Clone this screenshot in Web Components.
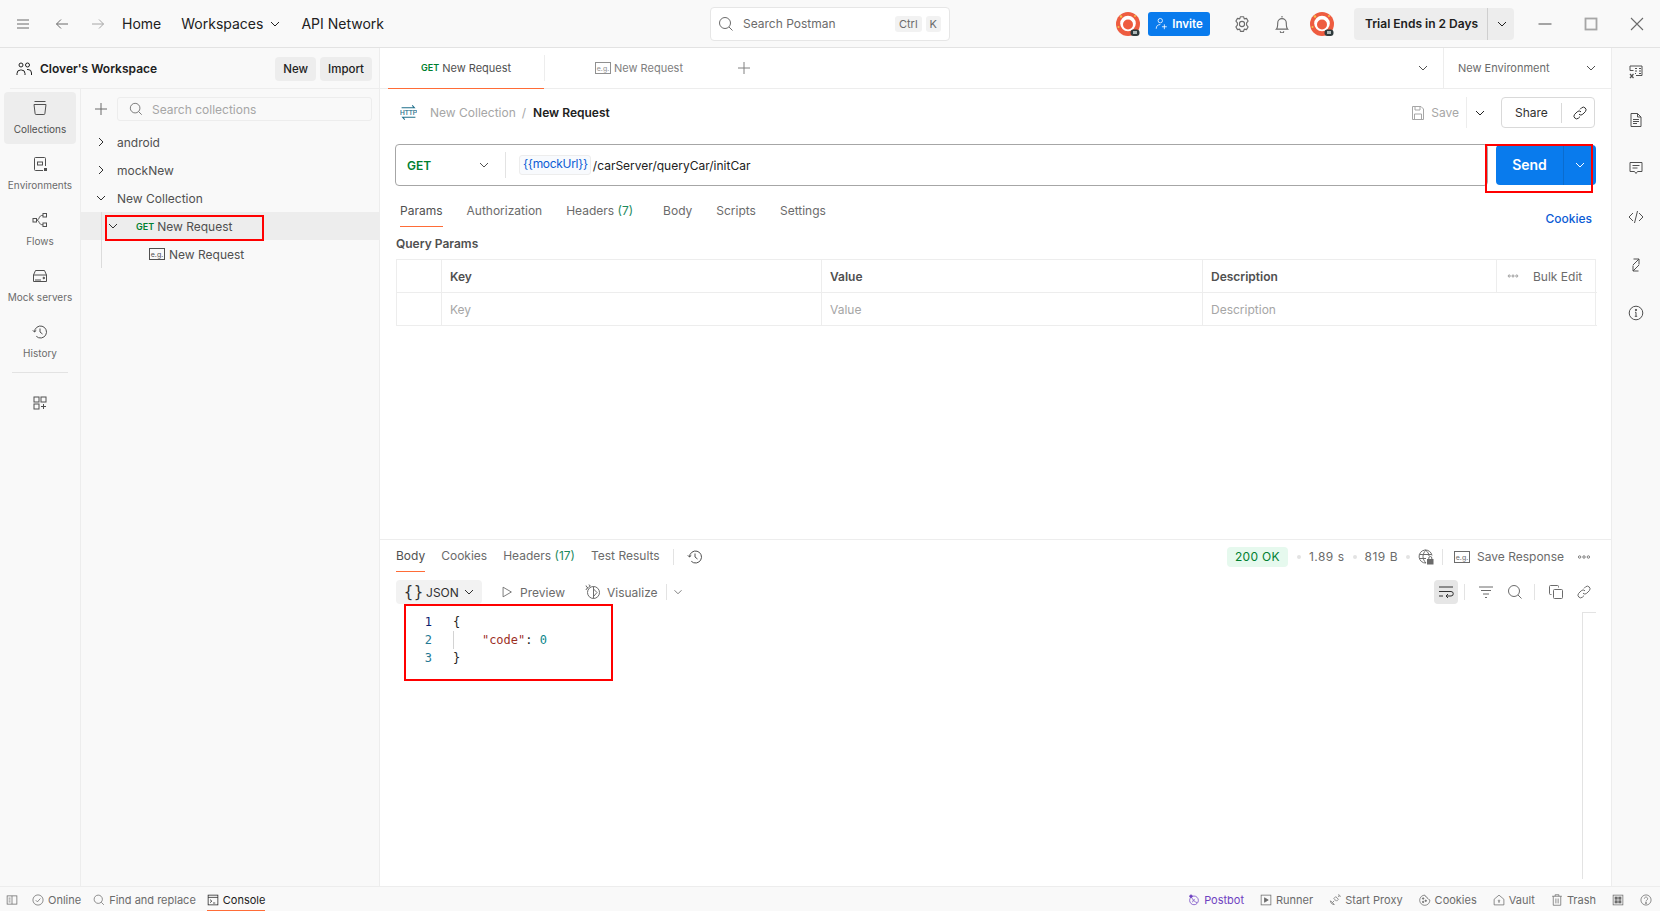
<!DOCTYPE html>
<html lang="en">
<head>
<meta charset="utf-8">
<title>Postman</title>
<style>
  html, body { margin: 0; height: 100%; overflow: hidden; background: #f9f9f9; }
  body { font: 12px Inter, "Liberation Sans", sans-serif; color: #212121; }
</style>
</head>
<body>
<pm-app>
  <pm-topbar slot="top"></pm-topbar>
  <pm-sidebar slot="side"></pm-sidebar>
  <pm-tabstrip slot="main"></pm-tabstrip>
  <pm-request slot="main"></pm-request>
  <pm-response slot="main"></pm-response>
  <pm-rail slot="rail"></pm-rail>
  <pm-statusbar slot="bottom"></pm-statusbar>
</pm-app>

<script>
(function () {
  const ICONS = {
    menu: '<path d="M2 4h12M2 8h12M2 12h12"/>',
    back: '<path d="M14 8H2.5M7 3.5 2.5 8 7 12.5"/>',
    forward: '<path d="M2 8h11.5M9 3.5 13.5 8 9 12.5"/>',
    down: '<path d="M4 6l4 4 4-4"/>',
    right: '<path d="M6 4l4 4-4 4"/>',
    search: '<circle cx="7" cy="7" r="5.5"/><path d="M11 11l3.5 3.5"/>',
    users: '<circle cx="5" cy="4" r="2"/><circle cx="11.5" cy="4" r="2"/><path d="M1 14v-1.5A3.5 3.5 0 0 1 4.5 9h1A3.5 3.5 0 0 1 9 12.5V14M11 8.5h1a3.5 3.5 0 0 1 3.5 3.5v2"/>',
    plus: '<path d="M8 2v12M2 8h12"/>',
    collections: '<path d="M2.5 1.5h11M2 4.5h12l-1.1 9a1 1 0 0 1-1 1H4.100a1 1 0 0 1-1-1z"/>',
    env: '<path d="M13.500 10V2.500a1 1 0 0 0-1-1h-9a1 1 0 0 0-1 1v11a1 1 0 0 0 1 1H11"/><rect x="5.500" y="6" width="5" height="3"/><rect x="12.500" y="12.500" width="2" height="2" fill="currentColor"/>',
    flows: '<rect x="1" y="6.500" width="3.500" height="3.500"/><rect x="11" y="1.500" width="3.500" height="3.500"/><rect x="11" y="11" width="3.500" height="3.500"/><path d="M4.500 8.200c3.500 0 1.500-4.900 6.500-4.900M4.500 8.200c3.500 0 1.500 4.600 6.500 4.600"/>',
    mock: '<path d="M1.500 7 3.500 2.500h9L14.500 7v6.500h-13zM1.500 7h13M4 13.500v-2.500M6 13.500v-2.500M8 13.500v-2.500"/><circle cx="11.800" cy="10" r=".8" fill="currentColor"/>',
    history: '<path d="M2.500 8a6 6 0 1 1 1.800 4.300M.8 6.300 2.500 8l1.800-1.700M8 4.500V8l2.500 2"/>',
    apps: '<rect x="2" y="2" width="5" height="5"/><rect x="9" y="2" width="5" height="5"/><rect x="2" y="9" width="5" height="5"/><path d="M11.500 9v5M9 11.500h5"/>',
    http: '<path d="M1.500 3.500h12l-2-2.200M14.500 12.500h-12l2 2.200" stroke="#1f6f8b"/><text x="8" y="10.300" text-anchor="middle" font-family="Liberation Sans" font-size="6.200" fill="#1f6f8b" stroke="#1f6f8b" stroke-width=".15">HTTP</text>',
    eg: '<rect x=".5" y="2.500" width="15" height="11"/><text x="8" y="10.500" text-anchor="middle" font-family="Inter" font-size="7" fill="currentColor" stroke="none">e.g.</text>',
    save: '<path d="M2.500 1.500h8.500l2.500 2.500v10.500h-11zM5 1.500V5h5V1.500M4.500 14.500V9h7v5.500"/>',
    link: '<path d="M7 9.200a2.700 2.700 0 0 0 3.800 0l2.600-2.600a2.700 2.700 0 0 0-3.800-3.800L8 4.400M9 6.800a2.700 2.700 0 0 0-3.800 0l-2.600 2.600a2.700 2.700 0 0 0 3.800 3.800L8 11.600"/>',
    gear: '<path stroke-linejoin="round" d="M6.600 1.500h2.800l.6 1.900 2-.4 1.400 2.400-1.300 1.500v2.200l1.300 1.500L12 13l-2-.4-.6 1.900H6.600L6 12.600l-2 .4-1.400-2.400 1.300-1.500V6.900L2.600 5.400 4 3l2 .4z"/><circle cx="8" cy="8" r="2.300"/>',
    bell: '<path d="M8 .8v1.400M3 12.500c1-1 1.200-2.500 1.200-5.500a3.800 3.800 0 0 1 7.600 0c0 3 .2 4.500 1.200 5.500zM6.500 14.500a1.500 1.500 0 0 0 3 0"/>',
    invite: '<circle cx="6.500" cy="4.500" r="2.700"/><path d="M1.500 14.500c0-3.500 2-5.200 5-5.200M11.500 9v6M8.500 12h6"/>',
    min: '<path d="M1.500 8h13" stroke-width="1.200"/>',
    max: '<rect x="2.500" y="2.500" width="11" height="11" stroke-width="1.800"/>',
    close: '<path d="M2 2l12 12M14 2 2 14" stroke-width="1.100"/>',
    vars: '<path d="M2 6.500V2h12v9.500H8M2 6.500h3.500M7 4.500h2M11 4.500h2M7 7h2M11 7h2M11 9.500h2M7 9.500h1"/><path d="M2 10l3.500 4M5.500 10 2 14" stroke-width="1.200"/>',
    doc: '<path d="M3 1.500h6.500l3.500 3.500v9.500H3zM9.500 1.500V5H13M5 7.500h6M5 9.500h6M5 11.500h4"/>',
    comment: '<path d="M2 2.500h12v9H9.500L8 13.500l-1.500-2H2zM4.500 5.500h7M4.500 8h5"/>',
    code: '<path d="M5 4 1 8l4 4M11 4l4 4-4 4M9.500 2l-3 12"/>',
    changes: '<path d="M5.500 2H11v5.500M11 2 5 8M10.500 14H5V8.500M5 14l6-6"/>',
    info: '<circle cx="8" cy="8" r="6.800"/><path d="M7 7.300h1v4M6.800 11.300h2.400"/><circle cx="8" cy="5" r=".7" fill="currentColor"/>',
    play: '<path d="M3.500 2.500v11l9.500-5.500z"/>',
    visualize: '<circle cx="8.500" cy="8.500" r="6"/><path d="M8.500 2.500v12M8.500 5l3.500 3.500-3.500 4M1 1.500l.7 1.600L3.300 3.800l-1.600.7L1 6M4 .5l.4 1 1 .4-1 .4-.4 1"/>',
    wrap: '<path d="M1 3h14M1 7.500h12a2.200 2.200 0 0 1 0 4.500H8M10 10l-2 2 2 2M1 12h4"/>',
    filter: '<path d="M1 3h14M3 6.500h10M5 10h6M7 13.500h2"/>',
    copy: '<rect x="5.500" y="5.500" width="9" height="9" rx="1"/><path d="M3.500 10.500h-1a1 1 0 0 1-1-1v-7a1 1 0 0 1 1-1h7a1 1 0 0 1 1 1v1"/>',
    dots: '<circle cx="3" cy="8" r="1.400"/><circle cx="8" cy="8" r="1.400"/><circle cx="13" cy="8" r="1.400"/>',
    globe: '<path d="M8 14A6.500 6.500 0 1 1 14 6.500M8 1C4 5 4 10 8 14M7.500 1c2.500 2 3.500 4 3.500 6M1.500 5.500h12M1.500 9.500H8"/><rect x="9.500" y="10.500" width="5.500" height="4.500" fill="currentColor"/><path d="M10.800 10.500V9a1.500 1.500 0 0 1 3 0v1.500"/>',
    panel: '<rect x="1.500" y="2.500" width="13" height="11"/><path d="M8 2.500v11M3.500 5.500h2.500M3.500 8h2.500M3.500 10.500h2.500"/>',
    check: '<circle cx="8" cy="8" r="6.800"/><path d="M5 8.300l2.200 2.200L11.200 6"/>',
    terminal: '<rect x="1.500" y="1.500" width="13" height="13"/><path d="M1.500 4.500h13M4 7.500l2.500 2L4 11.500M8 12h3"/>',
    postbot: '<circle cx="8" cy="8.500" r="5.800"/><path d="M5 5c1.500 3 4 5.500 7 6.500M6 11c.5-2 1.500-3.500 3-4.500"/><circle cx="4" cy="3" r="1.800" fill="currentColor"/>',
    runner: '<rect x="1.500" y="1.500" width="13" height="13"/><path d="M6 5v6l5-3z" fill="currentColor"/>',
    proxy: '<path d="M2 9c0 3 2 5 5 5l-5-5zM4.500 11.500 7 9M9 3.500l3.500 3.500-2.500 2.500L6.500 6zM12 1a3 3 0 0 1 3 3M12 3a1 1 0 0 1 1 1"/>',
    cookie: '<path d="M8 1.500a2.500 2.500 0 0 0 2.500 2.500 2.500 2.500 0 0 0 2 2.500 2.500 2.500 0 0 0 2 1.500A6.800 6.800 0 1 1 8 1.500z"/><circle cx="5.500" cy="6" r="1" fill="currentColor"/><circle cx="9" cy="9" r="1" fill="currentColor"/><circle cx="5.500" cy="10.500" r="1" fill="currentColor"/>',
    vault: '<path d="M1.500 7 8 1.500 14.500 7v7.500h-13z"/><circle cx="8" cy="9" r="1"/><path d="M8 10v2"/>',
    trash: '<path d="M1.500 3h13M5.500 3V1h5v2M3 3v12h10V3M6.500 6v6.500M9.500 6v6.500"/>',
    bootcamp: '<rect x="1.500" y="1.500" width="13" height="13"/><rect x="4" y="4" width="3" height="3" fill="currentColor"/><rect x="9" y="4" width="3" height="3" fill="currentColor"/><rect x="4" y="9" width="3" height="3" fill="currentColor"/><rect x="9" y="9" width="3" height="3" fill="currentColor"/>',
    help: '<circle cx="8" cy="8" r="6.800"/><path d="M5.800 6.200a2.200 2.200 0 1 1 3.400 1.900c-.8.500-1.200 1-1.200 2"/><circle cx="8" cy="12" r=".7" fill="currentColor"/>'
  };

  class PmIcon extends HTMLElement {
    connectedCallback() {
      if (this.shadowRoot) return;
      const size = this.getAttribute("size") || 16;
      const root = this.attachShadow({ mode: "open" });
      root.innerHTML = `
        <style>
          :host { display: inline-flex; flex: none; width: ${size}px; height: ${size}px; }
          svg { display: block; width: 100%; height: 100%; fill: none; stroke: currentColor; stroke-width: 1; }
        </style>
        <svg viewBox="0 0 16 16">${ICONS[this.getAttribute("name")] || ""}</svg>`;
    }
  }
  customElements.define("pm-icon", PmIcon);

  // Small base class: each element passes its css and markup once.
  class Part extends HTMLElement {
    render(css, html) {
      if (this.shadowRoot) return;
      const root = this.attachShadow({ mode: "open" });
      root.innerHTML = `<style>${css}</style>${html}`;
    }
  }

  class PmAvatar extends HTMLElement {
    connectedCallback() {
      if (this.shadowRoot) return;
      this.attachShadow({ mode: "open" }).innerHTML = `
        <style>:host { display: inline-flex; flex: none; width: 24px; height: 24px; } svg { display: block; }</style>
        <svg width="24" height="24" viewBox="0 0 24 24">
          <circle cx="12" cy="12" r="12" fill="#ee5c40"/>
          <circle cx="12" cy="11.500" r="7.800" fill="#fff"/>
          <circle cx="12" cy="12.500" r="5" fill="#ee5c40"/>
          <circle cx="5" cy="4.500" r="1.200" fill="#f7c04a"/><circle cx="2.500" cy="15" r="1" fill="#f7c04a"/><circle cx="19" cy="4" r="1" fill="#f7c04a"/>
          <rect x="14.500" y="17.500" width="9" height="6.500" rx="3" fill="#2f3a3c"/>
          <rect x="17" y="19" width="4" height="3" fill="#aeb8b8"/>
        </svg>`;
    }
  }
  customElements.define("pm-avatar", PmAvatar);

  class PmApp extends Part {
    connectedCallback() {
      this.render(`
        :host { display: grid; width: 1660px; height: 911px; grid-template-rows: 48px 838px 25px; grid-template-columns: 380px 1231px 49px; }
        .top { grid-column: 1 / 4; display: block; }
        .side { display: block; min-height: 0; }
        .main { display: flex; flex-direction: column; background: #fff; min-height: 0; }
        .rail { display: block; border-left: 1px solid #ededed; background: #f9f9f9; }
        .bottom { grid-column: 1 / 4; display: block; }
      `, `
        <div class="top"><slot name="top"></slot></div>
        <div class="side"><slot name="side"></slot></div>
        <div class="main"><slot name="main"></slot></div>
        <div class="rail"><slot name="rail"></slot></div>
        <div class="bottom"><slot name="bottom"></slot></div>
      `);
    }
  }
  customElements.define("pm-app", PmApp);

  class PmTopbar extends Part {
    connectedCallback() {
      this.render(`
        :host { display: grid; grid-template-columns: 710px 240px 1fr; height: 48px; box-sizing: border-box; border-bottom: 1px solid #e3e3e3; background: #f9f9f9; color: #212121; align-items: center; font-size: 14px; }
        .zone { display: flex; align-items: center; height: 47px; }
        .left { padding-left: 15px; }
        .grey { color: #6b6b6b; } .pale { color: #a6a6a6; }
        .search { display: flex; align-items: center; box-sizing: border-box; height: 34px; background: #fff; border: 1px solid #e6e6e6; border-radius: 4px; padding: 0 8px 0 7px; font-size: 12px; color: #6b6b6b; }
        .search span { margin-left: 9px; flex: 1; }
        .search kbd { font: 11px Inter, sans-serif; background: #f2f2f2; border-radius: 3px; height: 16px; line-height: 16px; padding: 0 4px; margin-left: 4px; color: #6b6b6b; }
        .right { padding-left: 166px; }
        .invite { display: flex; align-items: center; justify-content: center; gap: 4px; box-sizing: border-box; width: 62px; height: 24px; margin-left: 8px; background: #097bed; color: #fff; border-radius: 3px; font-size: 11.500px; font-weight: 600; }
        .trial { display: flex; align-items: center; width: 160px; height: 32px; margin-left: 20px; background: #ededed; border-radius: 4px; font-size: 12px; font-weight: 600; box-sizing: border-box; padding-left: 11px; }
        .trial span { width: 122px; }
        .trial i { width: 1px; height: 32px; background: #cfcfcf; margin-right: 6px; }
      `, `
        <div class="zone left">
          <pm-icon class="grey" name="menu"></pm-icon>
          <pm-icon class="grey" name="back" style="margin-left:23px"></pm-icon>
          <pm-icon class="pale" name="forward" style="margin-left:20px"></pm-icon>
          <span style="margin-left:16px">Home</span>
          <span style="margin-left:20px">Workspaces</span>
          <pm-icon name="down" style="margin-left:4px"></pm-icon>
          <span style="margin-left:18px">API Network</span>
        </div>
        <div class="search">
          <pm-icon name="search"></pm-icon><span>Search Postman</span><kbd>Ctrl</kbd><kbd>K</kbd>
        </div>
        <div class="zone right">
          <pm-avatar></pm-avatar>
          <div class="invite"><pm-icon name="invite" size="13"></pm-icon>Invite</div>
          <pm-icon class="grey" name="gear" size="18" style="margin-left:23px"></pm-icon>
          <pm-icon class="grey" name="bell" size="18" style="margin-left:22px"></pm-icon>
          <pm-avatar style="margin-left:19px"></pm-avatar>
          <div class="trial"><span>Trial Ends in 2 Days</span><i></i><pm-icon name="down"></pm-icon></div>
          <pm-icon class="grey" name="min" style="margin-left:23px"></pm-icon>
          <pm-icon class="pale" name="max" style="margin-left:30px"></pm-icon>
          <pm-icon class="grey" name="close" style="margin-left:30px"></pm-icon>
        </div>
      `);
    }
  }
  customElements.define("pm-topbar", PmTopbar);

  class PmNavItem extends Part {
    connectedCallback() {
      this.render(`
        :host { display: flex; flex-direction: column; align-items: center; box-sizing: border-box; width: 72px; height: 52px; padding-top: 8px; margin-bottom: 4px; border-radius: 4px; font-size: 10px; line-height: 14px; color: #6b6b6b; white-space: nowrap; }
        :host([active]) { background: #ededed; color: #505050; }
        pm-icon { margin-bottom: 6px; color: #505050; }
      `, `<pm-icon name="${this.getAttribute("icon")}"></pm-icon><slot></slot>`);
    }
  }
  customElements.define("pm-nav-item", PmNavItem);

  class PmTreeRow extends Part {
    connectedCallback() {
      const indent = this.getAttribute("indent") || 12;
      this.render(`
        :host { display: flex; align-items: center; height: 28px; padding-left: ${indent}px; font-size: 12px; color: #505050; white-space: nowrap; }
        :host([selected]) { background: #ededed; }
        ::slotted(*) { flex: none; }
      `, `<slot name="lead"></slot><slot></slot>`);
    }
  }
  customElements.define("pm-tree-row", PmTreeRow);

  class PmSidebar extends Part {
    connectedCallback() {
      this.render(`
        :host { display: block; height: 838px; box-sizing: border-box; border-right: 1px solid #ededed; background: #f9f9f9; }
        .head { display: flex; align-items: center; box-sizing: border-box; height: 41px; padding: 0 7px 0 16px; position: relative; }
        .head::after { content: ""; position: absolute; left: 10px; right: 0; bottom: 0; height: 1px; background: #ededed; }
        .head b { font-size: 12px; font-weight: 600; margin-left: 8px; flex: 1; }
        .btn { height: 24px; line-height: 24px; padding: 0 8px; background: #ededed; border-radius: 4px; font-size: 11.500px; font-weight: 500; margin-left: 4px; }
        .body { display: flex; height: 797px; }
        .nav { box-sizing: border-box; width: 81px; border-right: 1px solid #ededed; padding: 3px 4px; }
        .sep { height: 1px; width: 56px; margin: 0 0 22px 8px; background: #e3e3e3; }
        .apps { display: block; margin-left: 28px; color: #505050; }
        .tree { width: 298px; position: relative; }
        .find { display: flex; align-items: center; padding: 8px 7px 0 12px; margin-bottom: 7px; }
        .find pm-icon:first-child { color: #6b6b6b; }
        .field { flex: 1; display: flex; align-items: center; gap: 9px; box-sizing: border-box; height: 24px; margin-left: 8px; padding-left: 11px; border: 1px solid #ededed; border-radius: 3px; font-size: 12px; color: #a6a6a6; }
        .field pm-icon { color: #505050; }
        .guide { position: absolute; left: 20px; top: 123px; width: 1px; height: 56px; background: #dcdcdc; }
        .get { font-size: 9px; font-weight: 600; color: #007f31; margin: 0 3px 0 15px; }
        .mark { position: absolute; left: 24px; top: 126px; width: 159px; height: 26px; box-sizing: border-box; border: 2px solid #f00; }
        .chev { margin-right: 8px; color: #303030; }
        .sel { color: #303030; }
      `, `
        <div class="head">
          <pm-icon name="users"></pm-icon><b>Clover's Workspace</b>
          <div class="btn">New</div><div class="btn">Import</div>
        </div>
        <div class="body">
          <div class="nav">
            <pm-nav-item icon="collections" active>Collections</pm-nav-item>
            <pm-nav-item icon="env">Environments</pm-nav-item>
            <pm-nav-item icon="flows">Flows</pm-nav-item>
            <pm-nav-item icon="mock">Mock servers</pm-nav-item>
            <pm-nav-item icon="history">History</pm-nav-item>
            <div class="sep"></div>
            <pm-icon class="apps" name="apps"></pm-icon>
          </div>
          <div class="tree">
            <div class="find">
              <pm-icon name="plus"></pm-icon>
              <div class="field"><pm-icon name="search" size="14"></pm-icon>Search collections</div>
            </div>
            <pm-tree-row><pm-icon class="chev" slot="lead" name="right"></pm-icon>android</pm-tree-row>
            <pm-tree-row><pm-icon class="chev" slot="lead" name="right"></pm-icon>mockNew</pm-tree-row>
            <pm-tree-row><pm-icon class="chev" slot="lead" name="down"></pm-icon>New Collection</pm-tree-row>
            <pm-tree-row indent="24" selected><pm-icon class="sel" slot="lead" name="down"></pm-icon><span class="get" slot="lead">GET</span>New Request</pm-tree-row>
            <pm-tree-row indent="68"><pm-icon slot="lead" name="eg" style="margin-right:4px"></pm-icon>New Request</pm-tree-row>
            <div class="guide"></div>
            <div class="mark"></div>
          </div>
        </div>
      `);
    }
  }
  customElements.define("pm-sidebar", PmSidebar);

  class PmTabstrip extends Part {
    connectedCallback() {
      this.render(`
        :host { display: flex; align-items: center; flex: none; box-sizing: border-box; height: 41px; border-bottom: 1px solid #ededed; font-size: 11px; color: #6b6b6b; padding-left: 8px; }
        .tab { display: flex; align-items: center; box-sizing: border-box; width: 156px; height: 41px; white-space: nowrap; }
        .on { padding-left: 33px; border-bottom: 1px solid #ff6c37; color: #505050; }
        .get { font-size: 9px; font-weight: 600; color: #007f31; margin-right: 3px; }
        .off { margin-left: 1px; padding-left: 49px; color: #808080; }
        .off pm-icon { margin-right: 3px; color: #909090; }
        .sep { width: 1px; height: 26px; background: #ededed; }
        .add { margin-left: 34px; color: #808080; }
        .more { margin-left: auto; margin-right: 12px; color: #505050; }
        .env { display: flex; align-items: center; justify-content: space-between; box-sizing: border-box; width: 168px; height: 40px; border-left: 1px solid #ededed; padding: 0 12px 0 14px; }
        .env pm-icon { color: #505050; }
      `, `
        <div class="tab on"><span class="get">GET</span>New Request</div>
        <div class="sep"></div>
        <div class="tab off"><pm-icon name="eg"></pm-icon>New Request</div>
        <pm-icon class="add" name="plus"></pm-icon>
        <pm-icon class="more" name="down"></pm-icon>
        <div class="env">New Environment<pm-icon name="down"></pm-icon></div>
      `);
    }
  }
  customElements.define("pm-tabstrip", PmTabstrip);

  class PmTabs extends Part {
    connectedCallback() {
      this.render(`
        :host { display: flex; align-items: stretch; height: 31px; font-size: 12px; color: #6b6b6b; }
        ::slotted(span) { display: block; box-sizing: border-box; height: 31px; line-height: 30px; margin-right: 24px; white-space: nowrap; }
        ::slotted(.on) { color: #505050; border-bottom: 1px solid #ff6c37; }
      `, `<slot></slot>`);
    }
  }
  customElements.define("pm-tabs", PmTabs);

  class PmRequest extends Part {
    connectedCallback() {
      this.render(`
        :host { display: block; flex: none; box-sizing: border-box; height: 451px; padding: 8px 15px 0 16px; border-bottom: 1px solid #ededed; font-size: 12px; color: #212121; position: relative; }
        .name { display: flex; align-items: center; height: 31px; padding-left: 4px; }
        .crumb { color: #a6a6a6; margin-left: 13px; }
        .slash { color: #a6a6a6; margin: 0 7px 0 6px; }
        .name b { font-weight: 600; }
        .save { margin-left: auto; display: flex; align-items: center; color: #a6a6a6; }
        .save span { margin-left: 5px; }
        .save i { width: 1px; height: 31px; background: #ededed; margin: 0 5px 0 7px; }
        .save pm-icon:last-child { color: #212121; margin-right: 13px; }
        .share { display: flex; align-items: center; box-sizing: border-box; width: 94px; height: 31px; border: 1px solid #d9d9d9; border-radius: 4px; padding-left: 13px; margin-right: 1px; color: #303030; }
        .share i { width: 1px; height: 20px; background: #d9d9d9; margin: 0 10px 0 13px; }
        .url { display: flex; margin: 16px 0 0 -1px; }
        .box { display: flex; align-items: center; box-sizing: border-box; width: 1093px; height: 42px; border: 1px solid #a6a6a6; border-radius: 4px; }
        .method { width: 110px; box-sizing: border-box; display: flex; align-items: center; padding-left: 11px; font-weight: 600; font-size: 12px; color: #007f31; border-right: 1px solid #e3e3e3; height: 26px; }
        .method span { width: 69px; }
        .method pm-icon { color: #505050; }
        .var { margin-left: 13px; padding: 0 2px 0 3px; border: 1px solid #ededed; border-radius: 3px; background: #f8fafd; height: 18px; line-height: 16px; color: #0b5cd5; letter-spacing: -.3px; }
        .path { margin-left: 2px; }
        .send { display: flex; align-items: center; box-sizing: border-box; width: 100px; height: 40px; margin: 1px 0 0 8px; background: #097bed; border-radius: 4px; color: #fff; font-weight: 600; font-size: 14px; }
        .send span { width: 67px; text-align: center; border-right: 1px solid #0a6ccf; line-height: 40px; }
        .send pm-icon { margin-left: 8px; }
        .tabrow { display: flex; align-items: center; margin-top: 10px; position: relative; padding-left: 4px; }
        .cookies { margin-left: auto; margin-right: 4px; color: #0b5cd5; font-weight: 500; position: relative; top: 7px; font-size: 12px; }
        .qp { margin-top: 9px; height: 16px; line-height: 16px; font-weight: 600; font-size: 12px; color: #505050; }
        .table { display: grid; grid-template-columns: 45px 380px 381px 294px 100px; grid-auto-rows: 33px; margin-top: 7px; border: solid #ededed; border-width: 1px 1px 0 1px; }
        .table div { display: flex; align-items: center; box-sizing: border-box; border-bottom: 1px solid #ededed; border-right: 1px solid #ededed; padding-left: 8px; }
        .table .end { border-right: 0; }
        .th { font-weight: 600; font-size: 12px; color: #505050; }
        .td { color: #a6a6a6; font-size: 12px; }
        .span2 { grid-column: span 2; }
        .table .bulk { color: #6b6b6b; gap: 14px; font-size: 12px; padding-left: 10px; }
        .bulk pm-icon { color: #808080; }
        .mark { position: absolute; left: 1105px; top: 55px; width: 108px; height: 49px; box-sizing: border-box; border: 2px solid #f00; }
      `, `
        <div class="name">
          <pm-icon name="http" size="17"></pm-icon>
          <span class="crumb">New Collection</span><span class="slash">/</span><b>New Request</b>
          <div class="save"><pm-icon name="save"></pm-icon><span>Save</span><i></i><pm-icon name="down"></pm-icon></div>
          <div class="share">Share<i></i><pm-icon name="link"></pm-icon></div>
        </div>
        <div class="url">
          <div class="box">
            <div class="method"><span>GET</span><pm-icon name="down"></pm-icon></div>
            <span class="var">{{mockUrl}}</span><span class="path">/carServer/queryCar/initCar</span>
          </div>
          <div class="send"><span>Send</span><pm-icon name="down"></pm-icon></div>
        </div>
        <div class="tabrow">
          <pm-tabs>
            <span class="on">Params</span><span>Authorization</span><span style="margin-right:30px">Headers <span style="color:#1d8a5e">(7)</span></span><span>Body</span><span>Scripts</span><span>Settings</span>
          </pm-tabs>
          <span class="cookies">Cookies</span>
        </div>
        <div class="qp">Query Params</div>
        <div class="table">
          <div></div><div class="th">Key</div><div class="th">Value</div><div class="th">Description</div><div class="bulk end"><pm-icon name="dots" size="12"></pm-icon>Bulk Edit</div>
          <div></div><div class="td">Key</div><div class="td">Value</div><div class="td span2 end">Description</div>
        </div>
        <div class="mark"></div>
      `);
    }
  }
  customElements.define("pm-request", PmRequest);

  class PmResponse extends Part {
    connectedCallback() {
      this.render(`
        :host { display: block; flex: 1; min-height: 0; box-sizing: border-box; padding: 1px 15px 0 16px; position: relative; font-size: 12px; color: #6b6b6b; }
        .row { display: flex; align-items: center; }
        .tabs { height: 31px; }
        .div { width: 1px; height: 16px; background: #e3e3e3; }
        .status { margin-left: auto; display: flex; align-items: center; }
        .ok { display: block; width: 61px; height: 20px; line-height: 20px; text-align: center; background: #e6f9ee; border-radius: 4px; color: #007f31; font-size: 12px; letter-spacing: .3px; }
        .dot { width: 4px; height: 4px; border-radius: 50%; background: #e3e3e3; margin: 0 8px; }
        .num { letter-spacing: .5px; }
        .fmt { height: 24px; margin-top: 8px; }
        .json { display: flex; align-items: center; box-sizing: border-box; width: 86px; height: 24px; background: #f2f2f2; border-radius: 4px; padding-left: 8px; color: #303030; }
        .json b { font: 400 15px "DejaVu Sans Mono", monospace; letter-spacing: 1px; margin-right: 2px; }
        .opt { display: flex; align-items: center; }
        .tools { margin-left: auto; display: flex; align-items: center; color: #6b6b6b; }
        .wrap { display: flex; align-items: center; justify-content: center; width: 24px; height: 24px; background: #e6e6e6; border-radius: 4px; color: #303030; }
        .editor { display: flex; height: 267px; margin-top: 8px; }
        .code { flex: 1; display: grid; grid-template-columns: 36px 1fr; grid-auto-rows: 18px; column-gap: 21px; padding-top: 1px; font: 12px/18px "DejaVu Sans Mono", monospace; color: #212121; position: relative; }
        .code .n { text-align: right; color: #237893; }
        .code .cur { color: #0b216f; }
        .code pre { margin: 0; font: inherit; position: relative; }
        .k { color: #9c2f1f; } .v { color: #09868b; }
        .guide { position: absolute; left: 0; top: 0; width: 1px; height: 18px; background: #d3d3d3; }
        .mini { width: 14px; box-sizing: border-box; border: solid #e3e3e3; border-width: 1px 0 0 1px; }
        .mark { position: absolute; left: 24px; top: 64px; width: 209px; height: 77px; box-sizing: border-box; border: 2px solid #f00; }
      `, `
        <div class="row tabs">
          <pm-tabs>
            <span class="on" style="margin-right:16px">Body</span><span style="margin-right:16px">Cookies</span><span style="margin-right:16px">Headers <span style="color:#1d8a5e">(17)</span></span><span style="margin-right:0">Test Results</span>
          </pm-tabs>
          <i class="div" style="margin:0 13px"></i><pm-icon name="history" size="16" style="color:#505050"></pm-icon>
          <div class="status">
            <span class="ok">200 OK</span><i class="dot" style="margin:0 8px 0 9px"></i><span class="num">1.89 s</span><i class="dot"></i><span class="num">819 B</span><i class="dot"></i>
            <pm-icon name="globe"></pm-icon>
            <i class="div" style="margin:0 11px 0 8px"></i>
            <pm-icon name="eg"></pm-icon><span style="margin-left:7px">Save Response</span>
            <pm-icon name="dots" size="14" style="margin:0 5px 0 13px"></pm-icon>
          </div>
        </div>
        <div class="row fmt">
          <div class="json"><b>{}</b><span>JSON</span><pm-icon name="down" size="16" style="margin-left:2px"></pm-icon></div>
          <div class="opt" style="margin-left:18px"><pm-icon name="play" size="14"></pm-icon><span style="margin-left:6px">Preview</span></div>
          <div class="opt" style="margin-left:20px"><pm-icon name="visualize"></pm-icon><span style="margin-left:6px">Visualize</span></div>
          <i class="div" style="margin-left:8px"></i><pm-icon name="down" size="14" style="margin-left:4px"></pm-icon>
          <div class="tools">
            <div class="wrap"><pm-icon name="wrap"></pm-icon></div>
            <i class="div" style="margin:0 13px 0 6px"></i><pm-icon name="filter"></pm-icon>
            <pm-icon name="search" style="margin-left:13px"></pm-icon>
            <i class="div" style="margin:0 13px 0 11px"></i><pm-icon name="copy"></pm-icon>
            <pm-icon name="link" style="margin:0 4px 0 12px"></pm-icon>
          </div>
        </div>
        <div class="editor">
          <div class="code">
            <span class="n cur">1</span><pre>{</pre>
            <span class="n">2</span><pre><i class="guide"></i>    <span class="k">"code"</span>: <span class="v">0</span></pre>
            <span class="n">3</span><pre>}</pre>
          </div>
          <div class="mini"></div>
        </div>
        <div class="mark"></div>
      `);
    }
  }
  customElements.define("pm-response", PmResponse);

  class PmRail extends Part {
    connectedCallback() {
      this.render(`
        :host { display: flex; flex-direction: column; align-items: center; gap: 32.200px; padding-top: 16px; color: #505050; }
      `, ["vars", "doc", "comment", "code", "changes", "info"].map(n => `<pm-icon name="${n}"></pm-icon>`).join(""));
    }
  }
  customElements.define("pm-rail", PmRail);

  class PmStatusItem extends Part {
    connectedCallback() {
      this.render(`
        :host { display: inline-flex; align-items: center; gap: 4px; box-sizing: border-box; height: 24px; padding-top: 1px; white-space: nowrap; position: relative; }
        :host([active]) { color: #212121; }
        :host([active])::after { content: ""; position: absolute; left: 0; right: 0; bottom: 0; height: 1px; background: #ff6c37; }
      `, `<pm-icon name="${this.getAttribute("icon")}" size="12"></pm-icon><slot></slot>`);
    }
  }
  customElements.define("pm-status-item", PmStatusItem);

  class PmStatusbar extends Part {
    connectedCallback() {
      this.render(`
        :host { display: flex; align-items: center; justify-content: space-between; box-sizing: border-box; height: 25px; border-top: 1px solid #ededed; background: #f9f9f9; font-size: 11px; color: #6b6b6b; padding: 0 8px 0 6px; }
        .side { display: flex; align-items: center; gap: 12px; }
        .side.r { gap: 16px; }
        .bot { color: #6f42c1; }
      `, `
        <div class="side">
          <pm-status-item icon="panel" style="margin-right:2px"></pm-status-item>
          <pm-status-item icon="check">Online</pm-status-item>
          <pm-status-item icon="search" style="margin-right:-1px">Find and replace</pm-status-item>
          <pm-status-item icon="terminal" active>Console</pm-status-item>
        </div>
        <div class="side r">
          <pm-status-item class="bot" icon="postbot">Postbot</pm-status-item>
          <pm-status-item icon="runner">Runner</pm-status-item>
          <pm-status-item icon="proxy">Start Proxy</pm-status-item>
          <pm-status-item icon="cookie">Cookies</pm-status-item>
          <pm-status-item icon="vault">Vault</pm-status-item>
          <pm-status-item icon="trash">Trash</pm-status-item>
          <pm-status-item icon="bootcamp"></pm-status-item>
          <pm-status-item icon="help"></pm-status-item>
        </div>
      `);
    }
  }
  customElements.define("pm-statusbar", PmStatusbar);
})();
</script>
</body>
</html>
